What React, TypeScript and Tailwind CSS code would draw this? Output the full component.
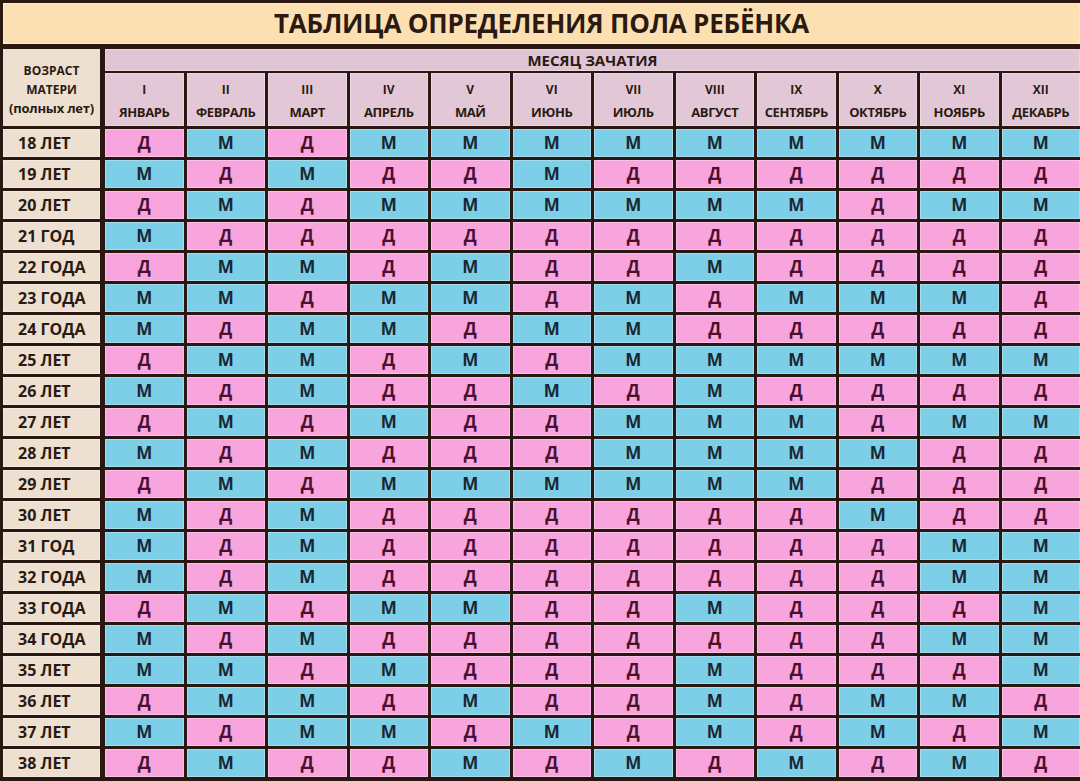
import React from 'react';

const months = [
  ['I', 'ЯНВАРЬ'],
  ['II', 'ФЕВРАЛЬ'],
  ['III', 'МАРТ'],
  ['IV', 'АПРЕЛЬ'],
  ['V', 'МАЙ'],
  ['VI', 'ИЮНЬ'],
  ['VII', 'ИЮЛЬ'],
  ['VIII', 'АВГУСТ'],
  ['IX', 'СЕНТЯБРЬ'],
  ['X', 'ОКТЯБРЬ'],
  ['XI', 'НОЯБРЬ'],
  ['XII', 'ДЕКАБРЬ'],
];

// Д = девочка, М = мальчик
const rows: [string, string][] = [
  ['18 ЛЕТ', 'ДМДМММММММММ'],
  ['19 ЛЕТ', 'МДМДДМДДДДДД'],
  ['20 ЛЕТ', 'ДМДММММММДММ'],
  ['21 ГОД', 'МДДДДДДДДДДД'],
  ['22 ГОДА', 'ДММДМДДМДДДД'],
  ['23 ГОДА', 'ММДММДМДМММД'],
  ['24 ГОДА', 'МДММДММДДДДД'],
  ['25 ЛЕТ', 'ДММДМДММММММ'],
  ['26 ЛЕТ', 'МДМДДМДМДДДД'],
  ['27 ЛЕТ', 'ДМДМДДМММДММ'],
  ['28 ЛЕТ', 'МДМДДДММММДД'],
  ['29 ЛЕТ', 'ДМДММММММДДД'],
  ['30 ЛЕТ', 'МДМДДДДДДМДД'],
  ['31 ГОД', 'МДМДДДДДДДММ'],
  ['32 ГОДА', 'МДМДДДДДДДММ'],
  ['33 ГОДА', 'ДМДММДДМДДДМ'],
  ['34 ГОДА', 'МДМДДДДДДДММ'],
  ['35 ЛЕТ', 'ММДМДДДМДДДМ'],
  ['36 ЛЕТ', 'ДММДМДДМДММД'],
  ['37 ЛЕТ', 'МДММДМДМДМДМ'],
  ['38 ЛЕТ', 'ДМДДМДМДМДМД'],
];

const font = { fontFamily: '"Open Sans", "Liberation Sans", sans-serif' };

function Cell({ v }: { v: string }) {
  const girl = v === 'Д';
  return (
    <div
      className={
        'flex-1 flex items-center justify-center border border-white/30 text-[17px] font-bold ' +
        (girl ? 'bg-[#f8a5dd] text-[#4b0f2f]' : 'bg-[#7ccfe7] text-[#1b2633]')
      }
    >
      {v}
    </div>
  );
}

export default function App() {
  return (
    <div className="w-[1080px] h-[781px] bg-[#2a1712] pl-[3px] pt-[3px] flex flex-col overflow-hidden" style={font}>
      {/* Title */}
      <div className="h-[41px] bg-[#fde0b1] flex items-center justify-center border border-[#f6eed8]">
        <h1 className="text-[26px] font-bold text-[#2a1a12] tracking-[-0.2px]">ТАБЛИЦА ОПРЕДЕЛЕНИЯ ПОЛА РЕБЁНКА</h1>
      </div>

      {/* Header */}
      <div className="mt-[5px] flex gap-[5px] h-[77px]">
        <div className="w-[97px] bg-[#ede0d1] flex flex-col items-center justify-center font-bold text-[#2a1a12] leading-[19px] pt-[4px]">
          <span className="text-[12px]">ВОЗРАСТ</span>
          <span className="text-[12px]">МАТЕРИ</span>
          <span className="text-[13px] tracking-[-0.2px] whitespace-nowrap">(полных лет)</span>
        </div>
        <div className="flex-1 flex flex-col gap-[2px]">
          <div className="h-[22px] bg-[#e0c6d5] flex items-center justify-center text-[15px] font-bold text-[#2a1a12] border border-white/30 leading-none">
            МЕСЯЦ ЗАЧАТИЯ
          </div>
          <div className="flex-1 flex gap-[3px]">
            {months.map(([r, m]) => (
              <div
                key={m}
                className="flex-1 bg-[#e2c8d7] flex flex-col items-center justify-center font-bold text-[#2a1a12] leading-[23px] border border-white/30 pt-[2px]"
              >
                <span className="text-[12px]">{r}</span>
                <span className="text-[13px] tracking-[-0.4px]">{m}</span>
              </div>
            ))}
          </div>
        </div>
      </div>

      {/* Rows */}
      <div className="mt-[3px] flex flex-col gap-[3px]">
        {rows.map(([age, vals]) => (
          <div key={age} className="flex gap-[5px] h-[28px]">
            <div className="w-[97px] bg-[#ede0d1] flex items-center pl-[14px] text-[16px] font-bold text-[#2a1a12] border border-white/30">
              {age}
            </div>
            <div className="flex-1 flex gap-[3px]">
              {vals.split('').map((v, i) => (
                <Cell key={i} v={v} />
              ))}
            </div>
          </div>
        ))}
      </div>
    </div>
  );
}
